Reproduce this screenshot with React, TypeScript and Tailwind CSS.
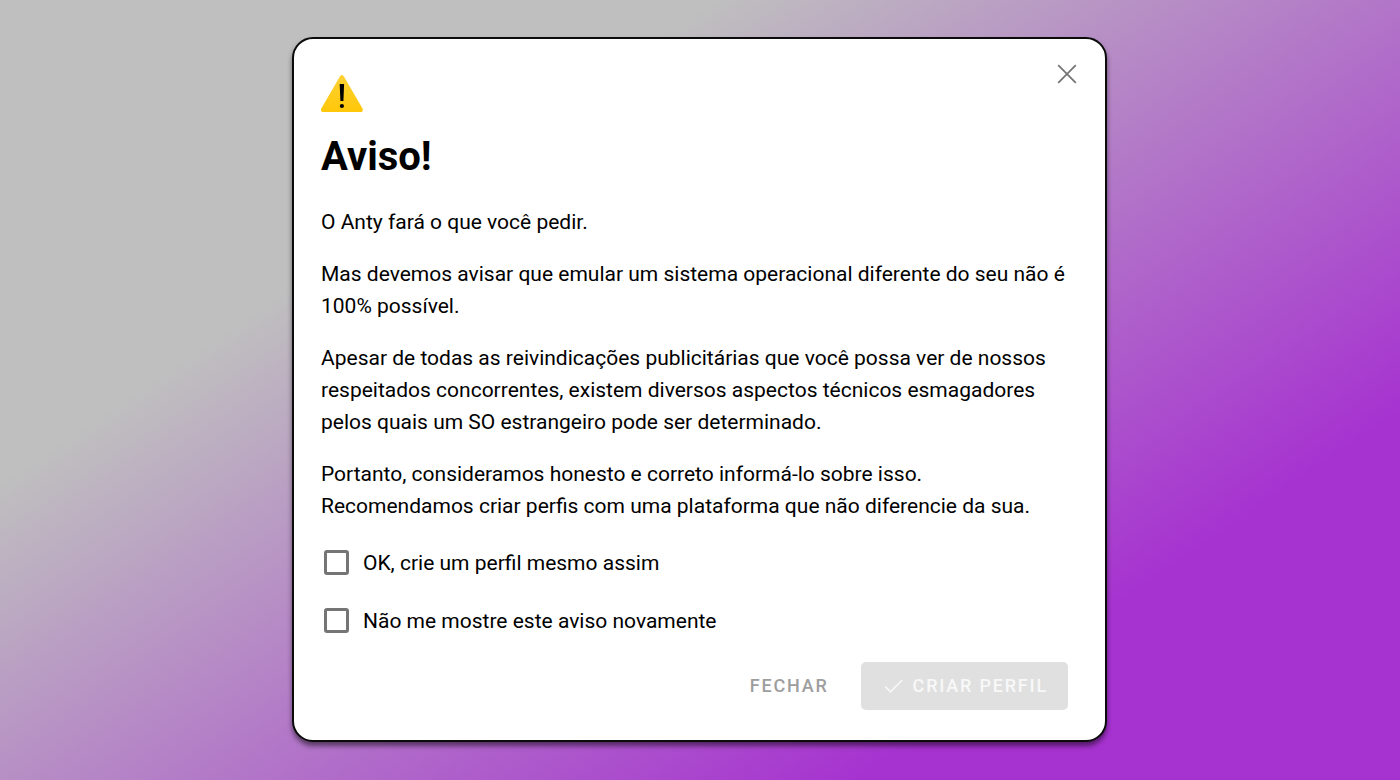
'use client';

import React, { useState } from 'react';

const paragraphs = [
  ['O Anty fará o que você pedir.'],
  ['Mas devemos avisar que emular um sistema operacional diferente do seu não é 100% possível.'],
  [
    'Apesar de todas as reivindicações publicitárias que você possa ver de nossos respeitados concorrentes, existem diversos aspectos técnicos esmagadores pelos quais um SO estrangeiro pode ser determinado.',
  ],
  [
    'Portanto, consideramos honesto e correto informá-lo sobre isso.',
    'Recomendamos criar perfis com uma plataforma que não diferencie da sua.',
  ],
];

const WarningIcon: React.FC = () => (
  <svg width="44" height="38" viewBox="0 0 44 38" className="block" aria-hidden="true">
    <defs>
      <linearGradient id="warn" x1="0" y1="0" x2="0" y2="1">
        <stop offset="0" stopColor="#fdd235" />
        <stop offset="1" stopColor="#ffc709" />
      </linearGradient>
    </defs>
    <path
      d="M19 1.3Q20.9 -1.3 22.8 1.3L41.5 33.6Q42.7 37 39.3 37H2.5Q-0.9 37 0.3 33.6Z"
      fill="url(#warn)"
    />
    <path d="M18.7 9h4.4l-.7 17h-3Z" fill="#000" />
    <circle cx="20.9" cy="31" r="2.1" fill="#000" />
  </svg>
);

interface CheckProps {
  id: string;
  label: string;
  checked: boolean;
  onChange: (value: boolean) => void;
}

const CheckRow: React.FC<CheckProps> = ({ id, label, checked, onChange }) => (
  <div className="flex items-center gap-[14px] pl-[3px]">
    <input
      id={id}
      type="checkbox"
      checked={checked}
      onChange={(e) => onChange(e.target.checked)}
      className="size-[25px] shrink-0 appearance-none rounded-[3px] border-3 border-[#757575] bg-white checked:bg-[#757575]"
    />
    <label htmlFor={id}>{label}</label>
  </div>
);

const App: React.FC = () => {
  const [accepted, setAccepted] = useState(false);
  const [hideWarning, setHideWarning] = useState(false);

  return (
    <div className="flex min-h-screen items-center justify-center bg-[linear-gradient(146deg,#bfbfbf_28%,#a632d0_79%)] pt-4 pr-[17px] pb-[18px] pl-4 font-['Roboto',sans-serif] text-black">
      <div
        role="dialog"
        aria-labelledby="title"
        className="relative w-full max-w-[815px] rounded-[21px] border-2 border-[#0b0b0b] bg-white pt-9 pr-[37px] pb-[30px] pl-[27px] shadow-[0_4px_5px_rgba(0,0,0,0.5)]"
      >
        <button type="button" aria-label="Fechar" className="absolute top-[23px] right-[26px]">
          <svg width="24" height="24" viewBox="0 0 24 24" fill="none" stroke="#757575" strokeWidth="1.8">
            <path d="M3.2 3.2l17.6 17.6M20.8 3.2L3.2 20.8" />
          </svg>
        </button>

        <WarningIcon />
        <h1 id="title" className="mt-5 text-[40px] leading-12 font-bold">
          Aviso!
        </h1>

        <div className="mt-[25px] flex flex-col gap-5 text-[21px] leading-8">
          {paragraphs.map((lines) => (
            <p key={lines[0]}>
              {lines.map((line) => (
                <span key={line} className="block">
                  {line}
                </span>
              ))}
            </p>
          ))}
        </div>

        <div className="mt-[25px] flex flex-col gap-[26px] text-[21px] leading-8">
          <CheckRow id="accept" label="OK, crie um perfil mesmo assim" checked={accepted} onChange={setAccepted} />
          <CheckRow
            id="hide"
            label="Não me mostre este aviso novamente"
            checked={hideWarning}
            onChange={setHideWarning}
          />
        </div>

        <div className="mt-[25px] flex justify-end gap-2 text-[18px] font-medium tracking-widest">
          <button type="button" className="h-12 px-6 text-[#9e9e9e]">
            FECHAR
          </button>
          <button
            type="button"
            disabled={!accepted}
            className="flex h-12 items-center gap-2 rounded-[5px] bg-[#a632d0] px-5 text-white disabled:bg-[#e0e0e0] disabled:text-[#f8f8f8]"
          >
            <svg width="24" height="24" viewBox="0 0 24 24" fill="none" stroke="currentColor" strokeWidth="1.6">
              <path d="M4.3 12.6l5.2 5.2L21 6.3" />
            </svg>
            CRIAR PERFIL
          </button>
        </div>
      </div>
    </div>
  );
};

export default App;
